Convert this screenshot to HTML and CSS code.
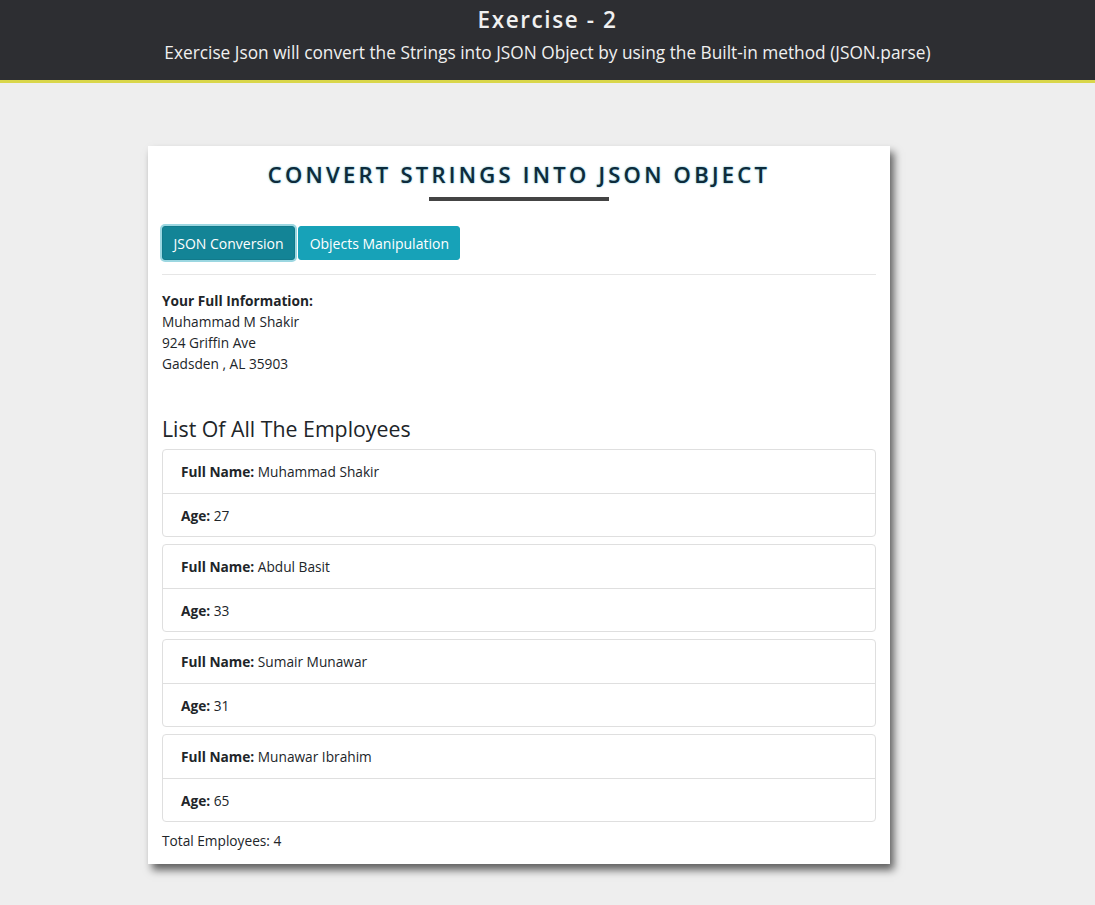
FILE: index.html
```html
<!DOCTYPE html>
<html>
<head>
<meta charset="utf-8">
<title>Exercise - 2</title>
<link rel="stylesheet" href="styles.css">
</head>
<body>
<header class="top">
  <h1 class="top-title">Exercise - 2</h1>
  <p class="top-sub">Exercise Json will convert the Strings into JSON Object by using the Built-in method (JSON.parse)</p>
</header>
<main class="page">
  <section class="card">
    <h2 class="card-title">Convert Strings into JSON Object</h2>
    <div class="title-bar"></div>
    <div class="tabs">
      <button class="btn btn-active">JSON Conversion</button>
      <button class="btn">Objects Manipulation</button>
    </div>
    <hr class="divider">
    <div class="info">
      <strong>Your Full Information:</strong><br>
      Muhammad M Shakir<br>
      924 Griffin Ave<br>
      Gadsden , AL 35903
    </div>
    <h3 class="list-title">List Of All The Employees</h3>
    <ul class="emp">
      <li class="emp-row"><b>Full Name:</b> Muhammad Shakir</li>
      <li class="emp-row"><b>Age:</b> 27</li>
    </ul>
    <ul class="emp">
      <li class="emp-row"><b>Full Name:</b> Abdul Basit</li>
      <li class="emp-row"><b>Age:</b> 33</li>
    </ul>
    <ul class="emp">
      <li class="emp-row"><b>Full Name:</b> Sumair Munawar</li>
      <li class="emp-row"><b>Age:</b> 31</li>
    </ul>
    <ul class="emp">
      <li class="emp-row"><b>Full Name:</b> Munawar Ibrahim</li>
      <li class="emp-row"><b>Age:</b> 65</li>
    </ul>
    <p class="total">Total Employees: 4</p>
  </section>
</main>
</body>
</html>
```

FILE: styles.css
```css
* { box-sizing: border-box; }
html, body { margin: 0; padding: 0; }
body {
  background: #eeeeee;
  font-family: "Open Sans", "Noto Sans", sans-serif;
  color: #212529;
  font-size: 13.7px;
}
.top {
  background: #2d2e32;
  border-bottom: 3px solid #d9d64a;
  height: 83px;
  text-align: center;
  color: #f0f0f0;
  padding-top: 6px;
}
.top-title {
  margin: 0;
  font-size: 22.5px;
  font-weight: 600;
  letter-spacing: 1.6px;
  line-height: 28px;
}
.top-sub {
  margin: 8px 0 0;
  font-size: 17.3px;
  line-height: 22px;
}
.page {
  padding: 63px 0 40px 148px;
}
.card {
  width: 742px;
  background: #fff;
  box-shadow: 4px 6px 8px rgba(0,0,0,0.6);
  padding: 13px 14px 13px 14px;
}
.card-title {
  margin: 0;
  text-align: center;
  text-transform: uppercase;
  font-size: 22px;
  font-weight: 600;
  letter-spacing: 3.25px;
  color: #0d2b3b;
  line-height: 30px;
  text-shadow: 0 0 2px #62b3c8;
}
.title-bar {
  width: 180px;
  height: 4px;
  background: #444;
  margin: 8px auto 0;
}
.tabs {
  display: flex;
  gap: 3px;
  margin-top: 25px;
}
.btn {
  font-family: inherit;
  font-size: 14px;
  color: #fff;
  background: #17a2b8;
  border: 1px solid #17a2b8;
  border-radius: 3px;
  height: 34px;
  padding: 0 10.5px;
  cursor: pointer;
}
.btn-active {
  background: #138496;
  border-color: #117a8b;
  box-shadow: 0 0 0 2px rgba(58,176,195,0.5);
}
.divider {
  border: 0;
  border-top: 1px solid #e6e6e6;
  margin: 14px 0 0;
}
.info {
  margin-top: 15px;
  line-height: 21px;
}
.info strong { font-weight: 700; }
.list-title {
  margin: 40px 0 5px;
  font-size: 21.3px;
  font-weight: 500;
  line-height: 30px;
}
.emp {
  list-style: none;
  margin: 0 0 7px;
  padding: 0;
  border: 1px solid #dfdfdf;
  border-radius: 4px;
}
.emp-row {
  height: 43px;
  padding: 0 18px;
  display: flex;
  align-items: center;
  white-space: pre;
}
.emp-row + .emp-row { border-top: 1px solid #dfdfdf; }
.emp-row b { font-weight: 700; }
.total {
  margin: 9px 0 0;
  line-height: 20px;
}
```
